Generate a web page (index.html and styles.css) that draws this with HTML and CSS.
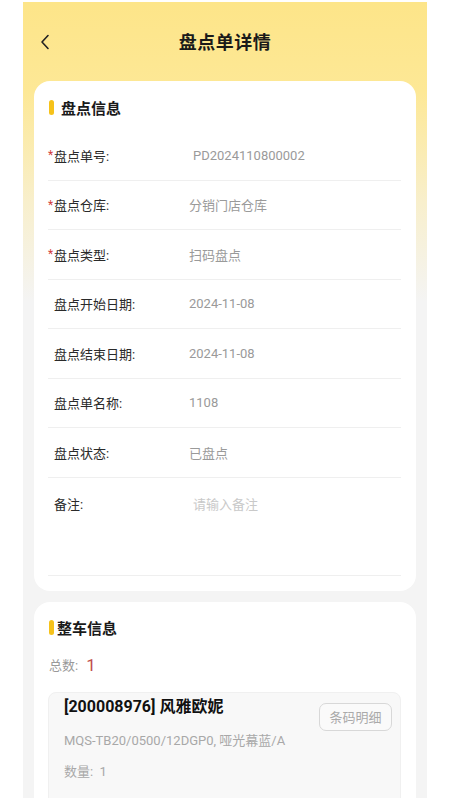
FILE: index.html
```html
<!DOCTYPE html>
<html lang="zh-CN">
<head>
<meta charset="utf-8">
<title>盘点单详情</title>
<link rel="stylesheet" href="styles.css">
</head>
<body>
<div class="app">
  <div class="nav">
    <svg class="back" width="10" height="16" viewBox="0 0 10 16"><path d="M8 1.5 L2 8 L8 14.5" fill="none" stroke="#222" stroke-width="1.6" stroke-linecap="round" stroke-linejoin="round"/></svg>
    <div class="nav-title">盘点单详情</div>
  </div>

  <div class="card card-info">
    <div class="sec-head"><span class="bar"></span><span class="sec-title">盘点信息</span></div>
    <div class="row"><div class="label"><span class="req">*</span>盘点单号:</div><div class="value input">PD2024110800002</div></div>
    <div class="row"><div class="label"><span class="req">*</span>盘点仓库:</div><div class="value">分销门店仓库</div></div>
    <div class="row"><div class="label"><span class="req">*</span>盘点类型:</div><div class="value">扫码盘点</div></div>
    <div class="row"><div class="label"><span class="req"></span>盘点开始日期:</div><div class="value">2024-11-08</div></div>
    <div class="row"><div class="label"><span class="req"></span>盘点结束日期:</div><div class="value">2024-11-08</div></div>
    <div class="row"><div class="label"><span class="req"></span>盘点单名称:</div><div class="value">1108</div></div>
    <div class="row"><div class="label"><span class="req"></span>盘点状态:</div><div class="value">已盘点</div></div>
    <div class="row row-remark"><div class="label"><span class="req"></span>备注:</div><div class="value input placeholder">请输入备注</div></div>
  </div>

  <div class="card card-car">
    <div class="sec-head"><span class="bar"></span><span class="sec-title tight">整车信息</span></div>
    <div class="total"><span class="total-label">总数:</span><span class="total-num">1</span></div>
    <div class="item">
      <div class="item-top">
        <div class="item-title">[200008976] 风雅欧妮</div>
        <div class="btn">条码明细</div>
      </div>
      <div class="item-sub">MQS-TB20/0500/12DGP0, 哑光幕蓝/A</div>
      <div class="item-qty">数量: &nbsp;1</div>
    </div>
  </div>
</div>
</body>
</html>
```

FILE: styles.css
```css
* { box-sizing: border-box; }
html, body { margin: 0; padding: 0; background: #fff; }
body {
  font-family: Roboto, "Noto Sans CJK SC", sans-serif;
  color: #222;
}
.app {
  margin: 2px 0 0 23px;
  width: 404px;
  height: 796px;
  overflow: hidden;
  background: linear-gradient(180deg, #fde589 0px, #fde896 90px, #f8efcc 200px, #f4f4f4 300px, #f4f4f4 100%);
}
.nav {
  height: 79px;
  display: flex;
  align-items: center;
  justify-content: center;
  position: relative;
  padding-bottom: 2px;
}
.back {
  position: absolute;
  left: 17px;
  top: 32px;
}
.nav-title {
  font-family: "Noto Sans CJK SC", sans-serif;
  font-size: 18px;
  font-weight: 700;
  color: #1a1a1a;
  letter-spacing: 0.5px;
}
.card {
  margin: 0 11px;
  background: #fff;
  border-radius: 16px;
  padding: 16px 15px 0 14px;
}
.card-info { padding-bottom: 15px; }
.card-car { margin-top: 11px; height: 220px; }
.sec-head {
  display: flex;
  align-items: center;
  height: 20px;
}
.bar {
  width: 5px;
  height: 15px;
  border-radius: 3px;
  background: #f6c21a;
  margin-left: 1px;
}
.sec-title {
  font-family: "Noto Sans CJK SC", sans-serif;
  font-size: 15px;
  font-weight: 700;
  color: #1a1a1a;
  margin-left: 7px;
}
.sec-title.tight { margin-left: 3px; }
.card-info .sec-head { margin-bottom: 14px; }
.row {
  display: flex;
  align-items: center;
  height: 49.5px;
  border-bottom: 1px solid #efefef;
  font-size: 13px;
}
.label {
  width: 141px;
  color: #2a2a2a;
  display: flex;
  align-items: center;
}
.req {
  display: inline-block;
  width: 6px;
  color: #d23b3b;
  font-size: 12px;
}
.value { color: #9a9a9a; }
.value.input { padding-left: 4px; }
.placeholder { color: #c9c9c9; }
.row-remark {
  height: 98px;
  align-items: flex-start;
  padding-top: 16px;
}
.total {
  margin-top: 17px;
  display: flex;
  align-items: center;
  height: 20px;
}
.total-label { font-size: 13px; color: #999; margin-left: 1px; }
.total-num { font-size: 17px; color: #c0504d; margin-left: 8px; }
.item {
  margin-top: 17px;
  background: #f8f8f8;
  border: 1px solid #f0f0f0;
  border-radius: 8px;
  padding: 0 8px 0 15px;
  height: 120px;
}
.item-top {
  display: flex;
  justify-content: space-between;
  align-items: flex-start;
}
.item-title {
  font-size: 16px;
  font-weight: 700;
  color: #111;
  line-height: 24px;
  margin-top: 2px;
}
.btn {
  margin-top: 10px;
  width: 73px;
  height: 28px;
  border: 1px solid #d8d8d8;
  border-radius: 7px;
  color: #aaa;
  font-size: 13px;
  display: flex;
  align-items: center;
  justify-content: center;
  background: #fafafa;
}
.item-sub {
  margin-top: 0;
  font-size: 13px;
  color: #a8a8a8;
  line-height: 20px;
}
.item-qty {
  margin-top: 11px;
  font-size: 13px;
  color: #a8a8a8;
  line-height: 20px;
}
```
